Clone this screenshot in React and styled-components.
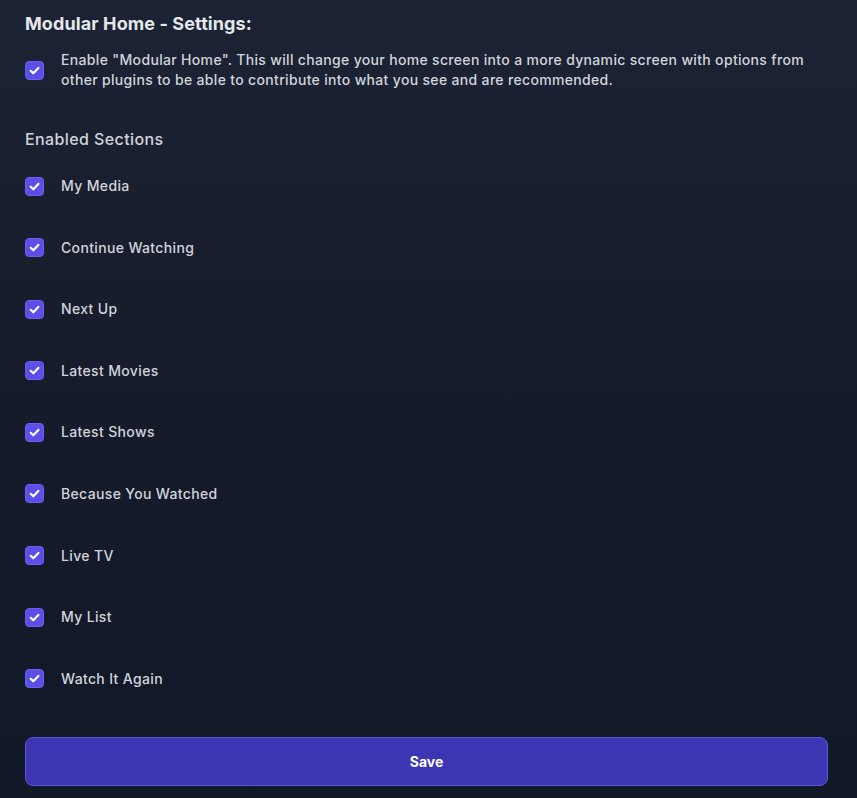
import React, { useState } from "react";
import styled, { createGlobalStyle } from "styled-components";

const Global = createGlobalStyle`
  html, body { margin: 0; padding: 0; }
  body {
    background: #111827;
    font-family: Inter, "Noto Sans", "Liberation Sans", sans-serif;
  }
  #root { min-height: 100vh; }
`;

const Page = styled.div`
  min-height: 100vh;
  box-sizing: border-box;
  background: linear-gradient(180deg, #1c2334 0%, #161c2b 45%, #111827 100%);
  padding: 10px 29px 12px 25px;
  display: flex;
  flex-direction: column;
`;

const Title = styled.h2`
  margin: 0;
  font-size: 18px;
  line-height: 28px;
  font-weight: 700;
  letter-spacing: 0.1px;
  color: #e5e7eb;
`;

const IntroRow = styled.label`
  margin-top: 12px;
  display: flex;
  align-items: center;
  gap: 17px;
  cursor: pointer;
`;

const IntroText = styled.span`
  font-size: 14px;
  line-height: 20px;
  font-weight: 500;
  letter-spacing: 0.33px;
  color: #d1d5db;
`;

const SectionHeading = styled.h3`
  margin: 37px 0 0;
  font-size: 16px;
  line-height: 24px;
  font-weight: 500;
  letter-spacing: 0.4px;
  color: #d1d5db;
`;

const List = styled.div`
  margin-top: 25px;
  display: flex;
  flex-direction: column;
  gap: 41.6px;
`;

const Item = styled.label`
  display: flex;
  align-items: center;
  gap: 17px;
  height: 20px;
  cursor: pointer;
`;

const ItemText = styled.span`
  font-size: 14px;
  line-height: 20px;
  font-weight: 500;
  letter-spacing: 0.35px;
  color: #d1d5db;
`;

const Box = styled.span`
  flex: none;
  width: 19px;
  height: 19px;
  border-radius: 4px;
  box-sizing: border-box;
  background: ${(p) => (p.$checked ? "#5b4fe8" : "transparent")};
  border: 1px solid ${(p) => (p.$checked ? "#6a60f0" : "#4b5563")};
  display: flex;
  align-items: center;
  justify-content: center;
`;

const SaveButton = styled.button`
  margin-top: 48px;
  width: 100%;
  height: 49px;
  border-radius: 8px;
  border: 1px solid #5b56d8;
  background: #3c36b2;
  color: #ffffff;
  font-family: inherit;
  font-size: 14px;
  font-weight: 700;
  cursor: pointer;
`;

function Check({ checked, onToggle }) {
  return (
    <Box $checked={checked} onClick={onToggle}>
      {checked && (
        <svg width="13" height="13" viewBox="0 0 12 12" fill="none">
          <path
            d="M2.5 6.3 L4.9 8.6 L9.6 3.6"
            stroke="#ffffff"
            strokeWidth="2"
            strokeLinecap="round"
            strokeLinejoin="round"
          />
        </svg>
      )}
    </Box>
  );
}

const SECTIONS = [
  "My Media",
  "Continue Watching",
  "Next Up",
  "Latest Movies",
  "Latest Shows",
  "Because You Watched",
  "Live TV",
  "My List",
  "Watch It Again",
];

export default function App() {
  const [enabled, setEnabled] = useState(true);
  const [checked, setChecked] = useState(() => SECTIONS.map(() => true));

  return (
    <>
      <Global />
      <Page>
        <Title>Modular Home - Settings:</Title>
        <IntroRow>
          <Check checked={enabled} onToggle={() => setEnabled((v) => !v)} />
          <IntroText>
            Enable "Modular Home". This will change your home screen into a more
            dynamic screen with options from other plugins to be able to
            contribute into what you see and are recommended.
          </IntroText>
        </IntroRow>
        <SectionHeading>Enabled Sections</SectionHeading>
        <List>
          {SECTIONS.map((s, i) => (
            <Item key={s}>
              <Check
                checked={checked[i]}
                onToggle={() =>
                  setChecked((c) => c.map((v, j) => (j === i ? !v : v)))
                }
              />
              <ItemText>{s}</ItemText>
            </Item>
          ))}
        </List>
        <SaveButton>Save</SaveButton>
      </Page>
    </>
  );
}
